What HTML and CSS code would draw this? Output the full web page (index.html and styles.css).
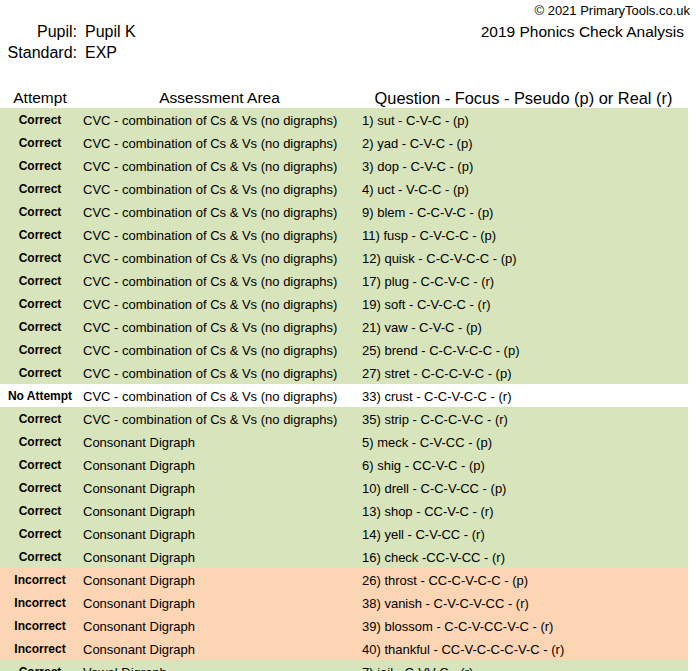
FILE: index.html
```html
<!DOCTYPE html>
<html lang="en">
<head>
<meta charset="utf-8">
<title>2019 Phonics Check Analysis</title>
<link rel="stylesheet" href="styles.css">
</head>
<body>
<div class="page">
  <header class="top">
    <div class="pupil-info">
      <span class="label">Pupil:</span><span class="value">Pupil K</span>
      <span class="label">Standard:</span><span class="value">EXP</span>
    </div>
    <div class="titles">
      <div class="copyright">© 2021 PrimaryTools.co.uk</div>
      <div class="title">2019 Phonics Check Analysis</div>
    </div>
  </header>

  <div class="table">
    <div class="row head">
      <div class="c1">Attempt</div>
      <div class="c2">Assessment Area</div>
      <div class="c3 qhead">Question - Focus - Pseudo (p) or Real (r)</div>
    </div>

    <div class="row correct"><div class="c1">Correct</div><div class="c2">CVC - combination of Cs &amp; Vs (no digraphs)</div><div class="c3">1) sut - C-V-C - (p)</div></div>
    <div class="row correct"><div class="c1">Correct</div><div class="c2">CVC - combination of Cs &amp; Vs (no digraphs)</div><div class="c3">2) yad - C-V-C - (p)</div></div>
    <div class="row correct"><div class="c1">Correct</div><div class="c2">CVC - combination of Cs &amp; Vs (no digraphs)</div><div class="c3">3) dop - C-V-C - (p)</div></div>
    <div class="row correct"><div class="c1">Correct</div><div class="c2">CVC - combination of Cs &amp; Vs (no digraphs)</div><div class="c3">4) uct - V-C-C - (p)</div></div>
    <div class="row correct"><div class="c1">Correct</div><div class="c2">CVC - combination of Cs &amp; Vs (no digraphs)</div><div class="c3">9) blem - C-C-V-C - (p)</div></div>
    <div class="row correct"><div class="c1">Correct</div><div class="c2">CVC - combination of Cs &amp; Vs (no digraphs)</div><div class="c3">11) fusp - C-V-C-C - (p)</div></div>
    <div class="row correct"><div class="c1">Correct</div><div class="c2">CVC - combination of Cs &amp; Vs (no digraphs)</div><div class="c3">12) quisk - C-C-V-C-C - (p)</div></div>
    <div class="row correct"><div class="c1">Correct</div><div class="c2">CVC - combination of Cs &amp; Vs (no digraphs)</div><div class="c3">17) plug - C-C-V-C - (r)</div></div>
    <div class="row correct"><div class="c1">Correct</div><div class="c2">CVC - combination of Cs &amp; Vs (no digraphs)</div><div class="c3">19) soft - C-V-C-C - (r)</div></div>
    <div class="row correct"><div class="c1">Correct</div><div class="c2">CVC - combination of Cs &amp; Vs (no digraphs)</div><div class="c3">21) vaw - C-V-C - (p)</div></div>
    <div class="row correct"><div class="c1">Correct</div><div class="c2">CVC - combination of Cs &amp; Vs (no digraphs)</div><div class="c3">25) brend - C-C-V-C-C - (p)</div></div>
    <div class="row correct"><div class="c1">Correct</div><div class="c2">CVC - combination of Cs &amp; Vs (no digraphs)</div><div class="c3">27) stret - C-C-C-V-C - (p)</div></div>
    <div class="row none"><div class="c1">No Attempt</div><div class="c2">CVC - combination of Cs &amp; Vs (no digraphs)</div><div class="c3">33) crust - C-C-V-C-C - (r)</div></div>
    <div class="row correct"><div class="c1">Correct</div><div class="c2">CVC - combination of Cs &amp; Vs (no digraphs)</div><div class="c3">35) strip - C-C-C-V-C - (r)</div></div>
    <div class="row correct"><div class="c1">Correct</div><div class="c2">Consonant Digraph</div><div class="c3">5) meck - C-V-CC - (p)</div></div>
    <div class="row correct"><div class="c1">Correct</div><div class="c2">Consonant Digraph</div><div class="c3">6) shig - CC-V-C - (p)</div></div>
    <div class="row correct"><div class="c1">Correct</div><div class="c2">Consonant Digraph</div><div class="c3">10) drell - C-C-V-CC - (p)</div></div>
    <div class="row correct"><div class="c1">Correct</div><div class="c2">Consonant Digraph</div><div class="c3">13) shop - CC-V-C - (r)</div></div>
    <div class="row correct"><div class="c1">Correct</div><div class="c2">Consonant Digraph</div><div class="c3">14) yell - C-V-CC - (r)</div></div>
    <div class="row correct"><div class="c1">Correct</div><div class="c2">Consonant Digraph</div><div class="c3">16) check -CC-V-CC - (r)</div></div>
    <div class="row incorrect"><div class="c1">Incorrect</div><div class="c2">Consonant Digraph</div><div class="c3">26) throst - CC-C-V-C-C - (p)</div></div>
    <div class="row incorrect"><div class="c1">Incorrect</div><div class="c2">Consonant Digraph</div><div class="c3">38) vanish - C-V-C-V-CC - (r)</div></div>
    <div class="row incorrect"><div class="c1">Incorrect</div><div class="c2">Consonant Digraph</div><div class="c3">39) blossom - C-C-V-CC-V-C - (r)</div></div>
    <div class="row incorrect"><div class="c1">Incorrect</div><div class="c2">Consonant Digraph</div><div class="c3">40) thankful - CC-V-C-C-C-V-C - (r)</div></div>
    <div class="row correct"><div class="c1">Correct</div><div class="c2">Vowel Digraph</div><div class="c3">7) jail - C-VV-C - (r)</div></div>
  </div>
</div>
</body>
</html>
```

FILE: styles.css
```css
html, body {
  margin: 0;
  padding: 0;
  background: #ffffff;
}

body {
  font-family: "Liberation Sans", Arial, sans-serif;
  color: #000000;
}

.page {
  width: 696px;
}

.top {
  display: flex;
  justify-content: space-between;
  height: 88px;
}

.pupil-info {
  display: grid;
  grid-template-columns: 77px auto;
  column-gap: 8px;
  align-content: start;
  padding-top: 21px;
  font-size: 16px;
  line-height: 21px;
}

.pupil-info .label {
  text-align: right;
}

.titles {
  text-align: right;
}

.copyright {
  font-size: 13px;
  line-height: 21px;
  padding-right: 6px;
}

.title {
  font-size: 15.5px;
  line-height: 21px;
  padding-right: 12px;
}

.table {
  width: 688px;
}

.row {
  display: grid;
  grid-template-columns: 80px 279px 1fr;
  height: 23px;
  font-size: 13px;
  line-height: 21px;
  white-space: nowrap;
  overflow: hidden;
}

.row > div {
  padding-top: 2px;
}

.row .c1 {
  text-align: center;
  font-weight: bold;
  font-size: 12px;
  padding-top: 1.5px;
}

.row .c2,
.row .c3 {
  padding-left: 3px;
}

.row.head {
  height: 20px;
  font-size: 15.5px;
  line-height: 20px;
}

.row.head > div {
  padding-top: 0;
  padding-left: 0;
  text-align: center;
  font-weight: normal;
  font-size: 15.5px;
}

.row.head .qhead {
  font-size: 16.4px;
}

.correct {
  background: #d8e4bc;
}

.incorrect {
  background: #fcd5b4;
}

.none {
  background: #ffffff;
}
```
